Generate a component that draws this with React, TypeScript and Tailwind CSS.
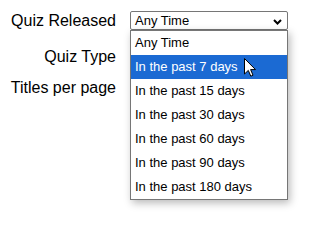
const options = [
  'Any Time',
  'In the past 7 days',
  'In the past 15 days',
  'In the past 30 days',
  'In the past 60 days',
  'In the past 90 days',
  'In the past 180 days',
];

function Cursor() {
  return (
    <svg className="absolute left-[244px] top-[58px]" width="12" height="19" viewBox="0 0 12 19">
      <path d="M0.5 0.5 L0.5 16 L4.3 12.4 L6.8 18.2 L9 17.2 L6.6 11.6 L11.5 11.6 Z" fill="#fff" stroke="#000" strokeWidth="1" strokeLinejoin="round" />
    </svg>
  );
}

export default function App() {
  const active = 1;

  return (
    <div className="relative w-[312px] h-[215px] bg-white overflow-hidden font-['Liberation_Sans',Arial,sans-serif] text-black">
      <div className="flex flex-col pt-[11px]">
        {/* Quiz Released */}
        <div className="flex items-start gap-[14px]">
          <label className="w-[116px] text-right text-[16px] leading-[19px]">Quiz Released</label>
          <div className="relative w-[158px]">
            <div className="h-[19px] border border-[#767676] rounded-[2px] flex items-center justify-between pl-[4px] pr-[5px] text-[13px] leading-none">
              <span>Any Time</span>
              <svg className="mt-[2px]" width="9" height="6" viewBox="0 0 9 6">
                <path d="M1 1 L4.5 4.5 L8 1" fill="none" stroke="#000" strokeWidth="2" />
              </svg>
            </div>
          </div>
        </div>

        {/* Quiz Type */}
        <div className="flex items-start gap-[14px] mt-[17px]">
          <label className="w-[116px] text-right text-[16px] leading-[19px]">Quiz Type</label>
          <div className="w-[158px] h-[19px]" />
        </div>

        {/* Titles per page */}
        <div className="flex items-start gap-[14px] mt-[12px]">
          <label className="w-[116px] text-right text-[16px] leading-[19px]">Titles per page</label>
          <div className="w-[158px] h-[19px]" />
        </div>
      </div>

      {/* open list */}
      <ul className="absolute left-[130px] top-[30px] w-[158px] bg-white border border-[#767676] shadow-[2px_3px_8px_rgba(0,0,0,0.28)]">
        {options.map((opt, i) => (
          <li
            key={opt}
            className={
              i === active
                ? 'h-6 flex items-center pl-[4px] text-[13px] bg-[#1b6ad3] text-white'
                : 'h-6 flex items-center pl-[4px] text-[13px] text-black'
            }
          >
            {opt}
          </li>
        ))}
      </ul>

      <Cursor />
    </div>
  );
}
